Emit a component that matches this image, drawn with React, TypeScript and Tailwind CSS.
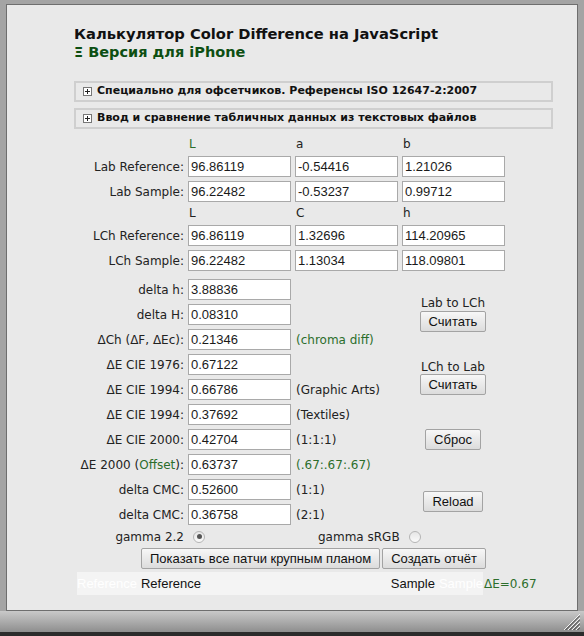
import React from 'react'

const green = 'text-[#2c6e2c]'

const labRows = [
    { label: 'Lab Reference:', values: ['96.86119', '-0.54416', '1.21026'] },
    { label: 'Lab Sample:', values: ['96.22482', '-0.53237', '0.99712'] },
]

const lchRows = [
    { label: 'LCh Reference:', values: ['96.86119', '1.32696', '114.20965'] },
    { label: 'LCh Sample:', values: ['96.22482', '1.13034', '118.09801'] },
]

type Row = { label: React.ReactNode; value: string; note?: React.ReactNode }

const deltaRows: Row[] = [
    { label: 'delta h:', value: '3.88836' },
    { label: 'delta H:', value: '0.08310' },
    { label: 'ΔCh (ΔF, ΔEc):', value: '0.21346', note: <span className={green}>(chroma diff)</span> },
    { label: 'ΔE CIE 1976:', value: '0.67122' },
    { label: 'ΔE CIE 1994:', value: '0.66786', note: '(Graphic Arts)' },
    { label: 'ΔE CIE 1994:', value: '0.37692', note: '(Textiles)' },
    { label: 'ΔE CIE 2000:', value: '0.42704', note: '(1:1:1)' },
    {
        label: (
            <>
                ΔE 2000 (<span className={green}>Offset</span>):
            </>
        ),
        value: '0.63737',
        note: <span className={green}>(.67:.67:.67)</span>,
    },
    { label: 'delta CMC:', value: '0.52600', note: '(1:1)' },
    { label: 'delta CMC:', value: '0.36758', note: '(2:1)' },
]

function Field({ value }: { value: string }) {
    return (
        <div className="h-[21px] w-[103px] bg-white border border-[#a9a9a9] pl-[2px] flex items-center font-['Liberation_Sans'] text-[13px] text-[#1a1a1a]">
            {value}
        </div>
    )
}

function Btn({ children, className = '' }: { children: React.ReactNode; className?: string }) {
    return (
        <button
            className={`h-[21px] px-[8px] border border-[#a3a3a3] rounded-[2px] bg-gradient-to-b from-[#f7f7f7] to-[#dcdcdc] font-['Liberation_Sans'] text-[13px] text-[#111] leading-none ${className}`}
        >
            {children}
        </button>
    )
}

function Radio({ checked }: { checked?: boolean }) {
    return (
        <span className="w-[12px] h-[12px] rounded-full border border-[#b5b5b5] bg-gradient-to-b from-[#e6e6e6] to-[#fafafa] flex items-center justify-center">
            {checked && <span className="w-[5px] h-[5px] rounded-full bg-[#555]" />}
        </span>
    )
}

function PlusBox() {
    return (
        <svg width="9" height="9" viewBox="0 0 9 9" className="shrink-0">
            <rect x="0.5" y="0.5" width="8" height="8" fill="#fff" stroke="#777" />
            <path d="M2 4.5h5M4.5 2v5" stroke="#222" />
        </svg>
    )
}

function Grip() {
    return (
        <svg width="16" height="16" viewBox="0 0 16 16">
            {[0, 4, 8, 12].map(o => (
                <g key={o}>
                    <line x1={16} y1={o} x2={o} y2={16} stroke="#f4f4f4" strokeWidth="1" />
                    <line x1={16} y1={o + 1.5} x2={o + 1.5} y2={16} stroke="#3a3a3a" strokeWidth="1" />
                </g>
            ))}
        </svg>
    )
}

export default function App() {
    return (
        <div className="w-[584px] h-[636px] flex flex-col bg-[#a4a4a4] font-['DejaVu_Sans'] text-[#222] overflow-hidden">
            <div className="px-[6px] pt-[4px]">
                <div className="h-[607px] border border-[#6e6e6e] bg-[#e9e9e9] pl-[67px] pt-[20px]">
                    {/* heading */}
                    <h1 className="text-[14.7px] font-bold leading-[18px] text-[#111]">
                        Калькулятор Color Difference на JavaScript
                    </h1>
                    <div className="text-[14.5px] font-bold leading-[18px] text-[#0d4f12]">Ξ Версия для iPhone</div>

                    {/* collapsible sections */}
                    <div className="mt-[20px] w-[479px] flex flex-col gap-[6px]">
                        {['Специально для офсетчиков. Референсы ISO 12647-2:2007', 'Ввод и сравнение табличных данных из текстовых файлов'].map(t => (
                            <div key={t} className="h-[21px] border-2 border-[#cfcfcf] flex items-center gap-[5px] pl-[7px]">
                                <PlusBox />
                                <span className="text-[11px] font-bold text-[#111]">{t}</span>
                            </div>
                        ))}
                    </div>

                    {/* Lab / LCh inputs */}
                    <div className="mt-[8px] grid grid-cols-[110px_103px_103px_103px] gap-x-[4px] gap-y-[4px] text-[12px] items-center">
                        <div className="h-[15px]" />
                        <div className={`h-[15px] leading-[15px] pl-[1px] ${green}`}>L</div>
                        <div className="h-[15px] leading-[15px] pl-[1px]">a</div>
                        <div className="h-[15px] leading-[15px] pl-[1px]">b</div>
                        {labRows.map(r => (
                            <React.Fragment key={r.label}>
                                <div className="text-right">{r.label}</div>
                                {r.values.map((v, i) => (
                                    <Field key={i} value={v} />
                                ))}
                            </React.Fragment>
                        ))}
                        <div className="h-[15px]" />
                        <div className="h-[15px] leading-[15px] pl-[1px]">L</div>
                        <div className="h-[15px] leading-[15px] pl-[1px]">C</div>
                        <div className="h-[15px] leading-[15px] pl-[1px]">h</div>
                        {lchRows.map(r => (
                            <React.Fragment key={r.label}>
                                <div className="text-right">{r.label}</div>
                                {r.values.map((v, i) => (
                                    <Field key={i} value={v} />
                                ))}
                            </React.Fragment>
                        ))}
                    </div>

                    {/* deltas + actions */}
                    <div className="mt-[8px] flex text-[12px]">
                        <div className="w-[326px] grid grid-cols-[110px_103px_1fr] gap-x-[4px] gap-y-[4px] items-center">
                            {deltaRows.map((r, i) => (
                                <React.Fragment key={i}>
                                    <div className="text-right whitespace-nowrap">{r.label}</div>
                                    <Field value={r.value} />
                                    <div className="pl-[1px] whitespace-nowrap">{r.note}</div>
                                </React.Fragment>
                            ))}
                        </div>
                        <div className="w-[106px] flex flex-col items-center">
                            <div className="mt-[17px] leading-[14px]">Lab to LCh</div>
                            <Btn className="mt-[1px]">Считать</Btn>
                            <div className="mt-[28px] leading-[14px]">LCh to Lab</div>
                            <Btn>Считать</Btn>
                            <Btn className="mt-[34px]">Сброс</Btn>
                            <Btn className="mt-[41px]">Reload</Btn>
                        </div>
                    </div>

                    {/* gamma */}
                    <div className="mt-[2px] h-[19px] flex items-center text-[12px]">
                        <span className="w-[110px] text-right">gamma 2.2</span>
                        <span className="ml-[9px]">
                            <Radio checked />
                        </span>
                        <span className="ml-[113px]">gamma sRGB</span>
                        <span className="ml-[9px]">
                            <Radio />
                        </span>
                    </div>

                    <div className="mt-[2px] ml-[67px] flex gap-[2px]">
                        <Btn>Показать все патчи крупным планом</Btn>
                        <Btn>Создать отчёт</Btn>
                    </div>

                    {/* patches */}
                    <div className="mt-[3px] ml-[3px] flex items-center">
                        <div className="w-[203px] h-[23px] bg-[#f4f4f4] flex items-center font-['Liberation_Sans'] text-[13px]">
                            <span className="text-white">Reference</span>
                            <span className="ml-[4px] text-[#111]">Reference</span>
                        </div>
                        <div className="w-[203px] h-[23px] bg-[#f3f3f3] flex items-center justify-end font-['Liberation_Sans'] text-[13px]">
                            <span className="text-[#111]">Sample</span>
                            <span className="ml-[4px] text-white">Sample</span>
                        </div>
                        <span className={`ml-[1px] text-[12px] ${green}`}>ΔE=0.67</span>
                    </div>
                </div>
            </div>
            <div className="h-[21px] bg-gradient-to-b from-[#c9c9c9] via-[#acacac] to-[#8e8e8e] flex justify-end items-end pr-[4px] pb-[2px]">
                <Grip />
            </div>
            <div className="flex-1 bg-[#2b2b2b]" />
        </div>
    )
}
